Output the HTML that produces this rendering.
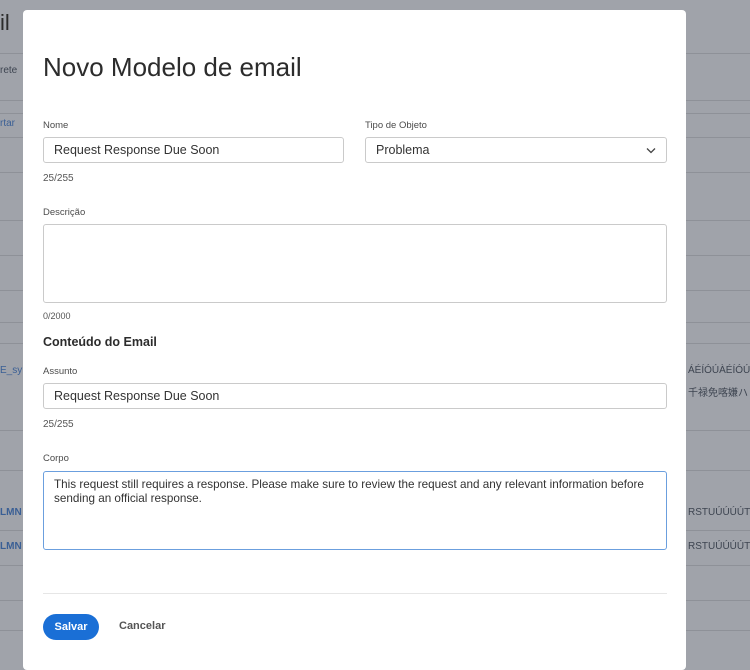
<!DOCTYPE html>
<html><head><style>
*{box-sizing:border-box;margin:0;padding:0}
body{width:750px;height:655px;overflow:hidden;background:#a0a3aa;font-family:"Liberation Sans",Arial,sans-serif;position:relative}
.bg{position:absolute;left:0;right:0;height:1px;background:#8e9198}
.bt{position:absolute;font-size:11px;color:#3d4450}
.modal{position:absolute;left:23px;top:10px;width:663px;height:660px;background:#fff;border-radius:4px}
.a{position:absolute}
h1{position:absolute;left:20px;top:42px;font-size:26px;font-weight:normal;color:#2c2c2c}
.lbl{position:absolute;font-size:9.5px;color:#4b4b4b}
.inp{position:absolute;border:1px solid #cacaca;border-radius:3px;font-size:12.5px;color:#333;padding-left:10px;display:flex;align-items:center}
.cnt{position:absolute;font-size:10px;color:#555}
</style></head><body>
<div class="bg" style="top:53px"></div><div class="bg" style="top:100px"></div><div class="bg" style="top:113px"></div>
<div class="bg" style="top:137px"></div><div class="bg" style="top:172px"></div><div class="bg" style="top:220px"></div>
<div class="bg" style="top:255px"></div><div class="bg" style="top:290px"></div><div class="bg" style="top:322px"></div>
<div class="bg" style="top:343px"></div><div class="bg" style="top:430px"></div><div class="bg" style="top:470px"></div>
<div class="bg" style="top:530px"></div><div class="bg" style="top:565px"></div><div class="bg" style="top:600px"></div><div class="bg" style="top:630px"></div>
<div class="bt" style="left:0;top:10px;font-size:22px;color:#2c2c2c">il</div>
<div class="bt" style="left:0;top:65px;font-size:10px">rete</div>
<div class="bt" style="left:0;top:118px;font-size:10px;color:#3a5f95">rtar</div>
<div class="bt" style="left:0;top:365px;font-size:10px;color:#3a5f95">E_sy</div>
<div class="bt" style="left:0;top:507px;font-size:10px;color:#3a5f95;font-weight:bold">LMN</div>
<div class="bt" style="left:0;top:541px;font-size:10px;color:#3a5f95;font-weight:bold">LMN</div>
<div class="bt" style="left:688px;top:365px;font-size:10px">ÁÉÍÓÚÀÉÍÓÚ</div>
<div class="bt" style="left:688px;top:384px;font-size:10px;font-family:'Noto Sans CJK JP',sans-serif">千禄免喀嫌ハ</div>
<div class="bt" style="left:688px;top:507px;font-size:10px">RSTUÚÚÚÚT</div>
<div class="bt" style="left:688px;top:541px;font-size:10px">RSTUÚÚÚÚT</div>
<div class="modal">
<h1>Novo Modelo de email</h1>
<div class="lbl" style="left:20px;top:110px">Nome</div>
<div class="inp" style="left:20px;top:127px;width:301px;height:26px">Request Response Due Soon</div>
<div class="lbl" style="left:342px;top:110px">Tipo de Objeto</div>
<div class="inp" style="left:342px;top:127px;width:302px;height:26px">Problema
<svg class="a" style="right:10px;top:9px" width="10" height="7" viewBox="0 0 10 7"><path d="M1 1.5L5 5.5L9 1.5" fill="none" stroke="#444" stroke-width="1.3"/></svg></div>
<div class="cnt" style="left:20px;top:163px">25/255</div>
<div class="lbl" style="left:20px;top:197px">Descrição</div>
<div class="inp" style="left:20px;top:214px;width:624px;height:79px"></div>
<div class="cnt" style="left:20px;top:301px;font-size:9px">0/2000</div>
<div class="a" style="left:20px;top:325px;font-size:12.5px;font-weight:bold;color:#2c2c2c">Conteúdo do Email</div>
<div class="lbl" style="left:20px;top:356px">Assunto</div>
<div class="inp" style="left:20px;top:373px;width:624px;height:26px">Request Response Due Soon</div>
<div class="cnt" style="left:20px;top:409px">25/255</div>
<div class="lbl" style="left:20px;top:443px">Corpo</div>
<div class="inp" style="left:20px;top:461px;width:624px;height:79px;border-color:#6b9fde;align-items:flex-start;padding-top:6px;padding-right:20px;font-size:11.7px;line-height:14px">This request still requires a response. Please make sure to review the request and any relevant information before sending an official response.</div>
<div class="a" style="left:20px;top:583px;width:624px;height:1px;background:#e6e6e6"></div>
<div class="a" style="left:20px;top:604px;width:56px;height:26px;border-radius:13px;background:#1a6fd6;color:#fff;font-size:11px;font-weight:bold;text-align:center;line-height:26px">Salvar</div>
<div class="a" style="left:96px;top:610px;font-size:11px;font-weight:bold;color:#555">Cancelar</div>
</div>
</body></html>
